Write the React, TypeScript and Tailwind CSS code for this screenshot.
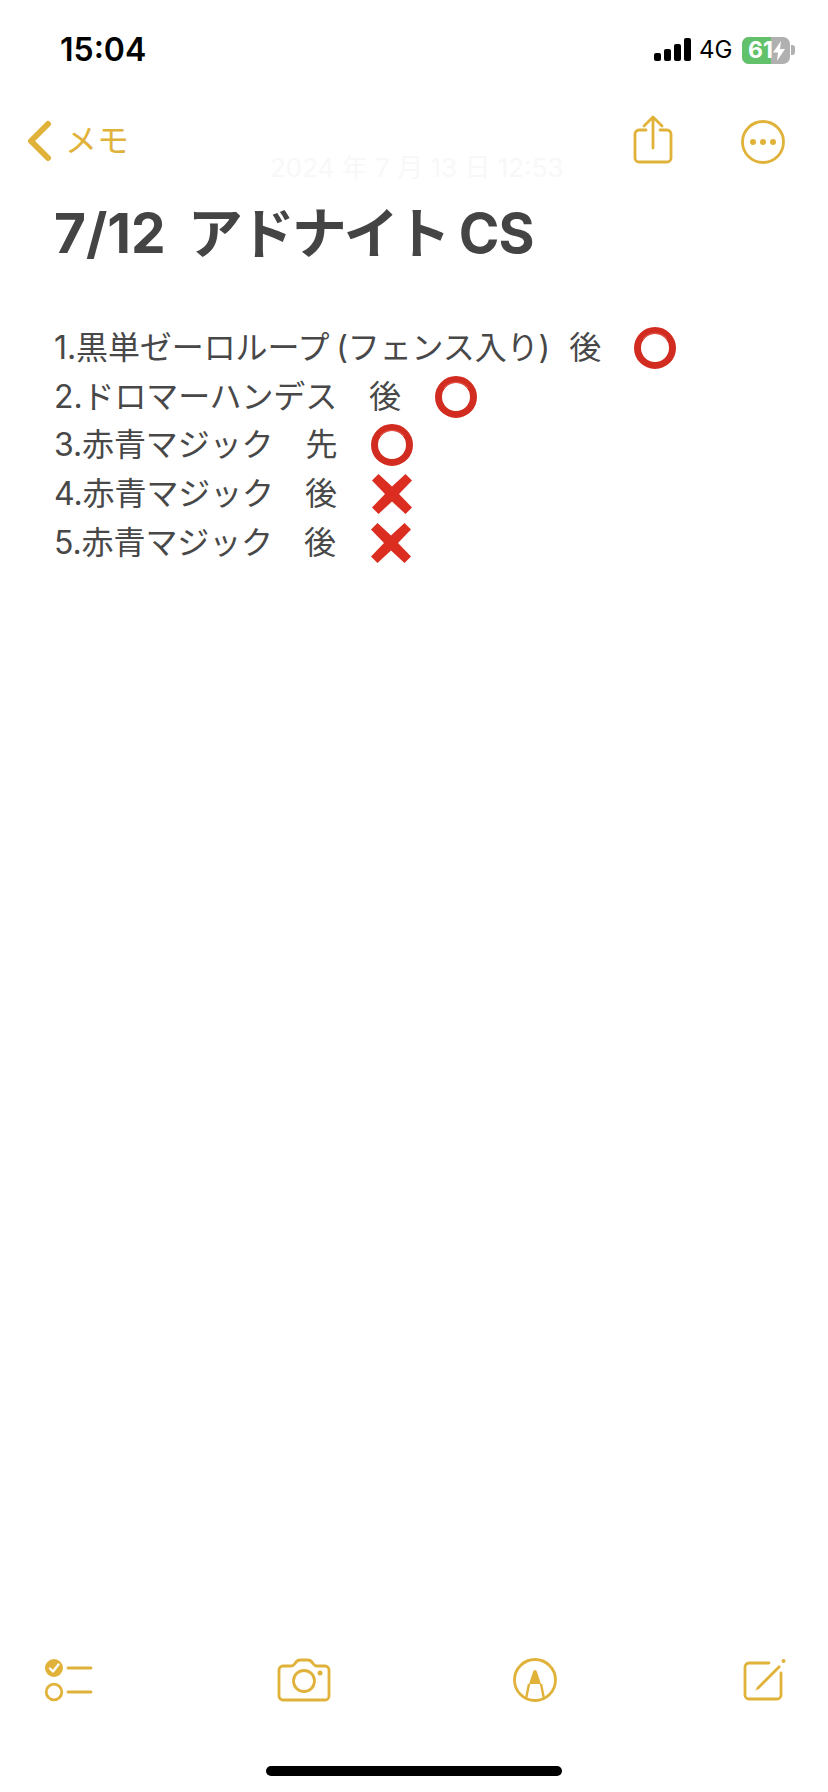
const GOLD = "#e0b23a";

function Ring() {
  return (
    <svg width="42" height="42" viewBox="0 0 42 42" className="shrink-0">
      <circle cx="21" cy="21" r="17.500" fill="none" stroke="#d22c20" strokeWidth="7" />
      <path d="M9 12a15.500 15.500 0 0 1 24 0" fill="none" stroke="#e8685c" strokeWidth="1.200" opacity="0.6" />
    </svg>
  );
}

function Cross() {
  return (
    <svg width="42" height="42" viewBox="0 0 42 42" className="shrink-0">
      <path d="M7.500 1 21 13.500 34.500 1 41 7.500 28 21 41 34.500 34.500 41 21 28.500 7.500 41 1 34.500 14 21 1 7.500Z" fill="#dc2e20" />
    </svg>
  );
}

const rows = [
  { t: "1.黒単ゼーロループ (フェンス入り)", m: "後", mx: 19, gap: 37, ring: true },
  { t: "2.ドロマーハンデス", m: "後", mx: 32, gap: 38, ring: true },
  { t: "3.赤青マジック", m: "先", mx: 32, gap: 38, ring: true },
  { t: "4.赤青マジック", m: "後", mx: 31, gap: 38, ring: false },
  { t: "5.赤青マジック", m: "後", mx: 31, gap: 38, ring: false },
];

export default function App() {
  return (
    <div className="w-[828px] h-[1792px] bg-white flex flex-col overflow-hidden font-['Inter','Noto_Sans_CJK_JP',sans-serif]">
      {/* status bar */}
      <div className="h-[109px] flex items-start justify-between pl-[60px] pr-[33px] pt-[30px] shrink-0">
        <span className="text-[32px] leading-[40px] font-semibold text-black">15:04</span>
        <div className="flex items-center mt-[6px]">
          <svg width="38" height="24" viewBox="0 0 38 24">
            <rect x="0" y="15" width="7" height="8" rx="2" fill="#000" />
            <rect x="10" y="11" width="7" height="12" rx="2" fill="#000" />
            <rect x="20" y="6" width="7" height="17" rx="2" fill="#000" />
            <rect x="30" y="0" width="7" height="23" rx="2" fill="#000" />
          </svg>
          <span className="ml-[7px] w-[43px] text-[24px] leading-[28px] text-black">4G</span>
          <div className="relative w-[48px] h-[27px] rounded-[7px] overflow-hidden bg-[#b0b0b0] flex">
            <div className="w-[29px] h-full bg-[#62c26b]" />
            <span className="absolute left-[6px] top-0 text-[23px] leading-[27px] font-bold text-white">61</span>
            <svg className="absolute left-[30px] top-[4px]" width="15" height="20" viewBox="0 0 15 20">
              <path d="M9 0 1 11.500h5L5 20l8-12H8Z" fill="#fff" />
            </svg>
          </div>
          <div className="w-[4px] h-[10px] ml-[1px] rounded-r-[3px] bg-[#b0b0b0]" />
        </div>
      </div>

      {/* nav */}
      <div className="relative h-[64px] flex items-center pl-[26px] pr-[43px] shrink-0">
        <svg width="26" height="42" viewBox="0 0 26 42">
          <path d="M22 4 5 21l17 17" fill="none" stroke={GOLD} strokeWidth="6" strokeLinecap="round" strokeLinejoin="round" />
        </svg>
        <span className="ml-[13px] text-[32px] leading-[40px] text-[#e0b23a]">メモ</span>
        <svg className="ml-auto -mt-[2px]" width="40" height="50" viewBox="0 0 40 50">
          <path d="M13 15H6a4 4 0 0 0-4 4v24a4 4 0 0 0 4 4h28a4 4 0 0 0 4-4V19a4 4 0 0 0-4-4h-7" fill="none" stroke={GOLD} strokeWidth="2.800" strokeLinecap="round" />
          <path d="M20 33V3M11 11l9-9 9 9" fill="none" stroke={GOLD} strokeWidth="2.800" strokeLinecap="round" strokeLinejoin="round" />
        </svg>
        <svg className="ml-[68px] mt-[1px]" width="44" height="44" viewBox="0 0 44 44">
          <circle cx="22" cy="22" r="20.500" fill="none" stroke={GOLD} strokeWidth="2.800" />
          <circle cx="12" cy="22" r="3" fill={GOLD} />
          <circle cx="22" cy="22" r="3" fill={GOLD} />
          <circle cx="32" cy="22" r="3" fill={GOLD} />
        </svg>
      </div>

      {/* note */}
      <div className="relative pl-[54px] shrink-0">
        <span className="absolute left-[270px] -top-[23px] text-[26px] leading-[36px] text-[#f8f8f8] whitespace-nowrap">2024 年 7 月 13 日 12:53</span>
        <h1 className="mt-[27px] text-[55px] leading-[66px] font-bold text-[#444444] whitespace-pre">
          7/12<span className="ml-[22px] tracking-[-3px]">アドナイト</span>
          <span className="ml-[11px] tracking-[-1px]">CS</span>
        </h1>
        <div className="mt-[58px] flex flex-col text-[#484848]">
          {rows.map((r) => (
            <div key={r.t} className="h-[48.600px] flex items-center text-[32px] tracking-[-0.1px] [word-spacing:-2px] whitespace-nowrap">
              <span>{r.t}</span>
              <span style={{ marginLeft: r.mx }}>{r.m}</span>
              <span style={{ marginLeft: r.gap - 4 }} className="flex">
                {r.ring ? <Ring /> : <Cross />}
              </span>
            </div>
          ))}
        </div>
      </div>

      {/* toolbar */}
      <div className="mt-auto flex items-start justify-between pl-[44px] pr-[42px] shrink-0">
        <svg width="50" height="46" viewBox="0 0 50 46">
          <circle cx="10" cy="10" r="9" fill={GOLD} />
          <path d="M6 10.500l3 3 5.500-7" fill="none" stroke="#fff" strokeWidth="2.400" strokeLinecap="round" strokeLinejoin="round" />
          <path d="M24 10h23M24 34h23" stroke={GOLD} strokeWidth="2.800" strokeLinecap="round" />
          <circle cx="10" cy="34" r="7.800" fill="none" stroke={GOLD} strokeWidth="2.800" />
        </svg>
        <svg className="ml-[-2px]" width="54" height="44" viewBox="0 0 54 44">
          <path d="M6 8h8c2 0 3-1 4-2.500C19.500 3 20.500 2 23 2h8c2.500 0 3.500 1 5 3.500 1 1.500 2 2.500 4 2.500h8a4 4 0 0 1 4 4v26a4 4 0 0 1-4 4H6a4 4 0 0 1-4-4V12a4 4 0 0 1 4-4Z" fill="none" stroke={GOLD} strokeWidth="2.800" strokeLinejoin="round" />
          <circle cx="27" cy="23" r="10.500" fill="none" stroke={GOLD} strokeWidth="2.800" />
          <circle cx="43" cy="15" r="2.500" fill={GOLD} />
        </svg>
        <svg className="ml-[-2px]" width="44" height="44" viewBox="0 0 44 44">
          <circle cx="22" cy="22" r="20.500" fill="none" stroke={GOLD} strokeWidth="2.800" />
          <path d="M22 12c1 0 1.500.7 2 2l4 12H16l4-12c.5-1.300 1-2 2-2Z" fill={GOLD} />
          <path d="M16 26 13 41M28 26l3 15" stroke={GOLD} strokeWidth="2.400" fill="none" />
        </svg>
        <svg width="44" height="44" viewBox="0 0 44 44">
          <path d="M27 5H7a4 4 0 0 0-4 4v28a4 4 0 0 0 4 4h28a4 4 0 0 0 4-4V15" fill="none" stroke={GOLD} strokeWidth="2.800" strokeLinecap="round" />
          <path d="M15 29l22-22 2 2-22 22-3.500 1.500Z" fill={GOLD} />
          <circle cx="41.500" cy="3" r="2" fill={GOLD} />
        </svg>
      </div>

      {/* home indicator */}
      <div className="mt-[62px] mb-[16px] flex justify-center shrink-0">
        <div className="w-[296px] h-[10px] rounded-full bg-black" />
      </div>
    </div>
  );
}
